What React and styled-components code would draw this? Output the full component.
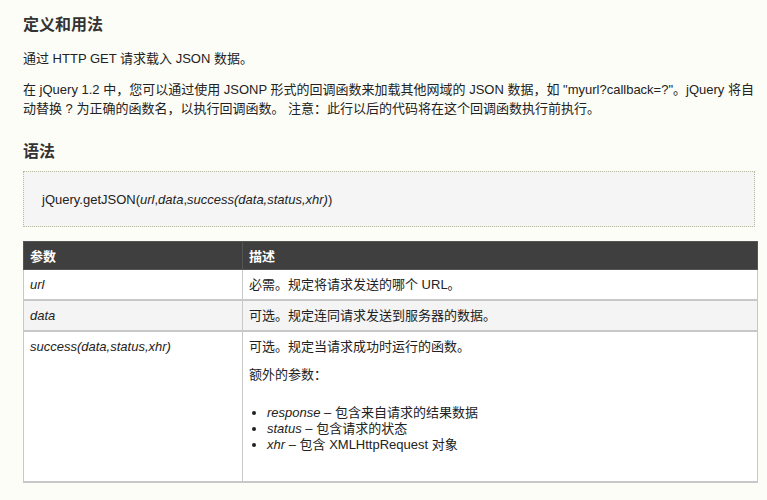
import React from "react";
import styled, { createGlobalStyle } from "styled-components";

const Global = createGlobalStyle`
  body { margin: 0; background: #fdfdf8; font-family: "Liberation Sans", Arial, "Noto Sans CJK SC", sans-serif; color: #222; font-size: 13px; }
`;
const Page = styled.div` padding: 7px 10px 20px 23px; `;
const H2 = styled.h2` font-size: 16px; font-weight: bold; margin: ${p => p.top || 4}px 0 ${p => p.bottom || 14}px; color: #333; `;
const P = styled.p` margin: 0 0 12px; line-height: 19px; `;
const Code = styled.div`
  margin: 0 2px 14px 0; background: #f5f5f5; border: 1px dotted #b8b8a0;
  height: 54px; display: flex; align-items: center; padding-left: 18px; font-size: 13px;
`;
const Table = styled.table`
  width: 735px; border-collapse: collapse; background: #fff; border: 1px solid #bbb;
`;
const Th = styled.th`
  background: #3f3f3f; color: #fff; text-align: left; font-weight: bold; height: 27px; padding: 0 6px;
  border: 1px solid #555;
  width: ${p => p.w || "auto"};
`;
const Td = styled.td`
  border: 1px solid #c8c8c8; border-width: 1px 1px 2px 1px; padding: 6px 6px; vertical-align: top; line-height: 17px;
  background: ${p => p.alt ? "#f4f4f4" : "#fff"};
`;
const Inner = styled.p` margin: 0 0 ${p => p.mb || 0}px; `;
const Ul = styled.ul` margin: 0 0 22px; padding-left: 18px; line-height: 16px; `;

export default function App() {
  return (
    <Page>
      <Global />
      <H2>定义和用法</H2>
      <P>通过 HTTP GET 请求载入 JSON 数据。</P>
      <P>在 jQuery 1.2 中，您可以通过使用 JSONP 形式的回调函数来加载其他网域的 JSON 数据，如 "myurl?callback=?"。jQuery 将自动替换 ? 为正确的函数名，以执行回调函数。 注意：此行以后的代码将在这个回调函数执行前执行。</P>
      <H2 top={20} bottom={9}>语法</H2>
      <Code><span>jQuery.getJSON(<i>url</i>,<i>data</i>,<i>success(data,status,xhr)</i>)</span></Code>
      <Table>
        <thead><tr><Th w="206px">参数</Th><Th>描述</Th></tr></thead>
        <tbody>
          <tr><Td><i>url</i></Td><Td>必需。规定将请求发送的哪个 URL。</Td></tr>
          <tr><Td alt><i>data</i></Td><Td alt>可选。规定连同请求发送到服务器的数据。</Td></tr>
          <tr><Td><i>success(data,status,xhr)</i></Td><Td>
            <Inner mb={11}>可选。规定当请求成功时运行的函数。</Inner>
            <Inner mb={22}>额外的参数：</Inner>
            <Ul>
              <li><i>response</i> – 包含来自请求的结果数据</li>
              <li><i>status</i> – 包含请求的状态</li>
              <li><i>xhr</i> – 包含 XMLHttpRequest 对象</li>
            </Ul>
          </Td></tr>
        </tbody>
      </Table>
    </Page>
  );
}
